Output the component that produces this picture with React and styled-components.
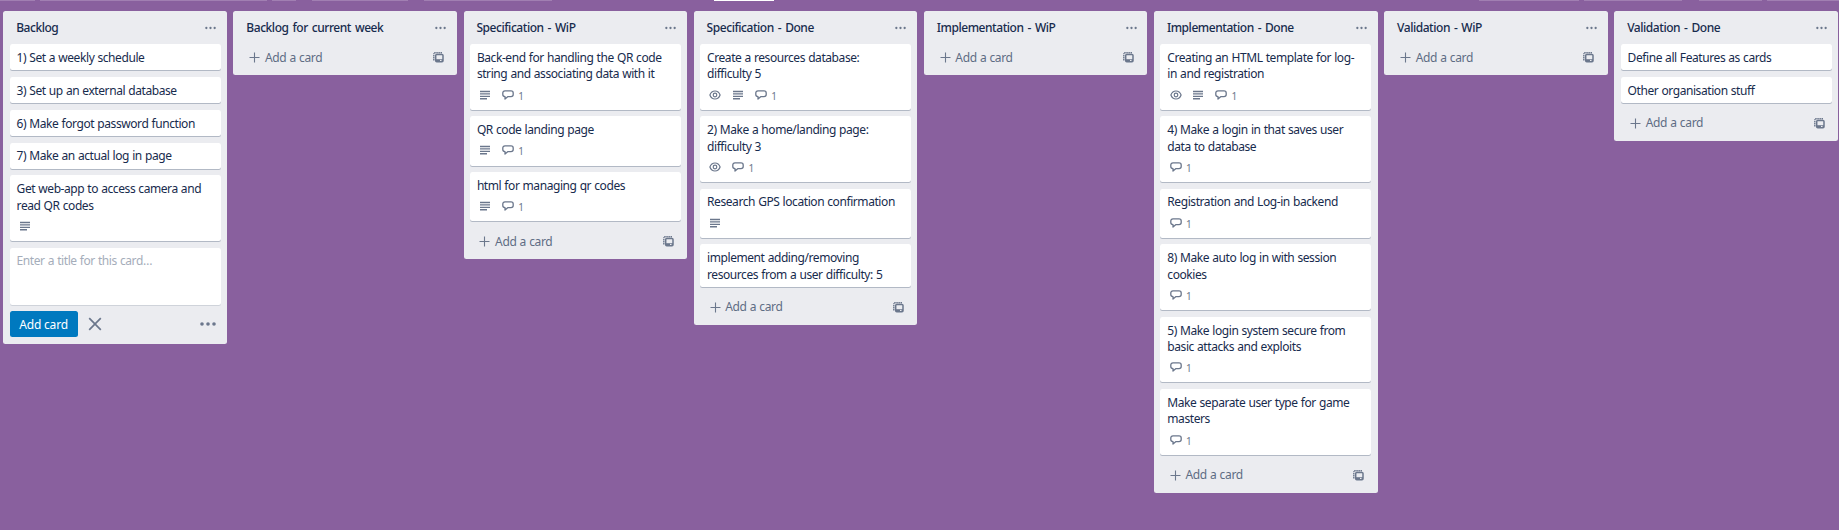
import React from 'react';
import styled, { createGlobalStyle } from 'styled-components';

const Global = createGlobalStyle`
  * { box-sizing: border-box; }
  body { margin: 0; background: #89609e; }
`;

const Page = styled.div`
  height: 530px;
  overflow: hidden;
  background: #89609e;
  color: #172b4d;
  font-family: 'Noto Sans', 'Open Sans', sans-serif;
  font-size: 12px;
  letter-spacing: -0.42px;
  word-spacing: 0.4px;
  line-height: 16.44px;
`;

const Toolbar = styled.div`
  display: flex;
  height: 11px;
`;

const ToolEdge = styled.div`
  height: 1px;
  flex: none;
  width: ${(p) => p.$w}px;
  margin-right: ${(p) => p.$gap}px;
  background: ${(p) => (p.$solid ? '#ffffff' : '#a17fb2')};
`;

const Board = styled.div`
  display: flex;
  align-items: flex-start;
  gap: 6.65px;
  padding-left: 3.3px;
`;

const List = styled.section`
  flex: none;
  width: 223.5px;
  background: #ebecf0;
  border-radius: 2.5px;
  padding: 0 6.2px 0 6.3px;
`;

const ListHeader = styled.header`
  display: flex;
  align-items: center;
  justify-content: space-between;
  height: 33px;
  padding: 1px 4.6px 0 6.6px;
`;

const ListTitle = styled.h2`
  margin: 0;
  font-size: 12px;
  font-weight: 500;
  line-height: 16px;
  letter-spacing: -0.45px;
  word-spacing: 1.3px;
  white-space: nowrap;
`;

const Cards = styled.div`
  display: flex;
  flex-direction: column;
`;

const Card = styled.article`
  background: #fff;
  border-radius: 2.5px;
  box-shadow: 0 1px 0 rgba(9, 30, 66, 0.25);
  padding: 5.9px 0 1.6px 7px;
  margin-bottom: 6.6px;
`;

const CardTitle = styled.div`
  padding-bottom: 2.35px;
  white-space: pre;
`;

const Badges = styled.div`
  display: flex;
  align-items: center;
  gap: 10.8px;
  height: 23px;
  padding: 0 0 4px 2.3px;
  color: #6b778c;
`;

const Badge = styled.span`
  display: flex;
  align-items: center;
  gap: 3px;
  font-size: 10px;
  line-height: 14px;
  svg { display: block; }
`;

const Count = styled.span`
  padding: 2px 0 0 1.4px;
`;

const AddRow = styled.div`
  display: flex;
  align-items: center;
  height: 31.2px;
  padding: 0 7px 3.4px 9.6px;
  color: #5e6c84;
`;

const AddLabel = styled.span`
  flex: 1;
  padding-left: 4.6px;
  letter-spacing: -0.35px;
`;

const Composer = styled.div`
  padding-bottom: 7px;
`;

const TitleInput = styled.div`
  height: 57px;
  padding: 5px 7px;
  margin-bottom: 6px;
  background: #fff;
  border-radius: 2.5px;
  box-shadow: 0 1px 0 rgba(9, 30, 66, 0.12);
  color: #a5adba;
`;

const Controls = styled.div`
  display: flex;
  align-items: center;
  height: 26px;
  padding-right: 5px;
`;

const AddButton = styled.button`
  width: 68px;
  height: 26px;
  padding: 2px 0 0;
  margin-right: 10.3px;
  border: 0;
  border-radius: 2.5px;
  background: #0079bf;
  color: #fff;
  font: inherit;
  letter-spacing: -0.2px;
`;

const Spacer = styled.span`
  flex: 1;
`;

const Dots = ({ w = 11, r = 1.15 }) => (
  <svg width={w} height="6" viewBox={`0 0 ${w} 6`} fill="#6b778c">
    <circle cx={r + 0.2} cy="3" r={r} />
    <circle cx={w / 2} cy="3" r={r} />
    <circle cx={w - r - 0.2} cy="3" r={r} />
  </svg>
);

const Plus = () => (
  <svg width="11" height="11" viewBox="0 0 11 11" stroke="#6b778c" strokeWidth="1.1">
    <path d="M5.5 0.5V10.5M0.5 5.5H10.5" />
  </svg>
);

const Close = () => (
  <svg width="14" height="14" viewBox="0 0 14 14" stroke="#6b778c" strokeWidth="1.7">
    <path d="M1.2 1.2L12.8 12.8M12.8 1.2L1.2 12.8" />
  </svg>
);

const Template = () => (
  <svg width="11" height="11" viewBox="0 0 11 11" fill="none" stroke="#6b778c">
    <path d="M0.8 8.6V1.2M1.2 0.8H9" strokeWidth="1.4" strokeDasharray="1.5 0.6" />
    <rect x="2.7" y="2.5" width="7.3" height="7.3" rx="1" strokeWidth="1.5" />
    <path d="M3 7.2H10V10H3Z" fill="#6b778c" stroke="none" />
    <rect x="7" y="7.9" width="1.5" height="1.1" fill="#ebecf0" stroke="none" />
  </svg>
);

const icons = {
  eye: (
    <svg width="12" height="12" viewBox="0 0 12 12" fill="none" stroke="#6b778c" strokeWidth="1.2">
      <path d="M0.9 6C1.9 3.2 3.7 2 6 2S10.1 3.2 11.1 6C10.1 8.8 8.3 10 6 10S1.9 8.8 0.9 6Z" />
      <circle cx="6" cy="6" r="1.8" />
    </svg>
  ),
  desc: (
    <svg width="12" height="12" viewBox="0 0 12 12" fill="#6b778c">
      <path d="M1 1.8H11V3.2H1ZM1 4.2H11V5.6H1ZM1 6.7H11V8.1H1ZM1 9.1H8V10.4H1Z" />
    </svg>
  ),
  comment: (
    <svg width="12" height="12" viewBox="0 0 12 12" fill="none" stroke="#6b778c" strokeWidth="1.3" strokeLinejoin="round">
      <path d="M3 1.9H9C10.4 1.9 11.2 2.7 11.2 4V5.5C11.2 6.8 10.3 7.6 9 7.6H6L3 10V7.6C1.6 7.5 0.8 6.8 0.8 5.5V4C0.8 2.7 1.6 1.9 3 1.9Z" />
    </svg>
  ),
};

const edges = [
  [35, 5], [227, 5], [24, 16], [96, 16], [128, 162], [60, 705, true],
  [100, 5], [98, 17], [63, 5], [72, 0],
];

const lists = [
  {
    title: 'Backlog',
    composing: true,
    cards: [
      ['1) Set a weekly schedule'],
      ['3) Set up an external database'],
      ['6) Make forgot password function'],
      ['7) Make an actual log in page'],
      ['Get web-app to access camera and\nread QR codes', 'desc'],
    ],
  },
  { title: 'Backlog for current week', cards: [] },
  {
    title: 'Specification - WiP',
    cards: [
      ['Back-end for handling the QR code\nstring and associating data with it', 'desc', 'comment'],
      ['QR code landing page', 'desc', 'comment'],
      ['html for managing qr codes', 'desc', 'comment'],
    ],
  },
  {
    title: 'Specification - Done',
    cards: [
      ['Create a resources database:\ndifficulty 5', 'eye', 'desc', 'comment'],
      ['2) Make a home/landing page:\ndifficulty 3', 'eye', 'comment'],
      ['Research GPS location confirmation', 'desc'],
      ['implement adding/removing\nresources from a user difficulty: 5'],
    ],
  },
  { title: 'Implementation - WiP', cards: [] },
  {
    title: 'Implementation - Done',
    cards: [
      ['Creating an HTML template for log-\nin and registration', 'eye', 'desc', 'comment'],
      ['4) Make a login in that saves user\ndata to database', 'comment'],
      ['Registration and Log-in backend', 'comment'],
      ['8) Make auto log in with session\ncookies', 'comment'],
      ['5) Make login system secure from\nbasic attacks and exploits', 'comment'],
      ['Make separate user type for game\nmasters', 'comment'],
    ],
  },
  { title: 'Validation - WiP', cards: [] },
  { title: 'Validation - Done', cards: [['Define all Features as cards'], ['Other organisation stuff']] },
];

export default function App() {
  return (
    <Page>
      <Global />
      <Toolbar>
        {edges.map(([w, gap, solid], i) => (
          <ToolEdge key={i} $w={w} $gap={gap} $solid={solid} />
        ))}
      </Toolbar>
      <Board>
        {lists.map((list) => (
          <List key={list.title}>
            <ListHeader>
              <ListTitle>{list.title}</ListTitle>
              <Dots />
            </ListHeader>
            <Cards>
              {list.cards.map(([title, ...badges]) => (
                <Card key={title}>
                  <CardTitle>{title}</CardTitle>
                  {badges.length > 0 && (
                    <Badges>
                      {badges.map((b) => (
                        <Badge key={b}>
                          {icons[b]}
                          {b === 'comment' && <Count>1</Count>}
                        </Badge>
                      ))}
                    </Badges>
                  )}
                </Card>
              ))}
            </Cards>
            {list.composing ? (
              <Composer>
                <TitleInput>Enter a title for this card…</TitleInput>
                <Controls>
                  <AddButton>Add card</AddButton>
                  <Close />
                  <Spacer />
                  <Dots w={16} r={1.8} />
                </Controls>
              </Composer>
            ) : (
              <AddRow>
                <Plus />
                <AddLabel>Add a card</AddLabel>
                <Template />
              </AddRow>
            )}
          </List>
        ))}
      </Board>
    </Page>
  );
}
